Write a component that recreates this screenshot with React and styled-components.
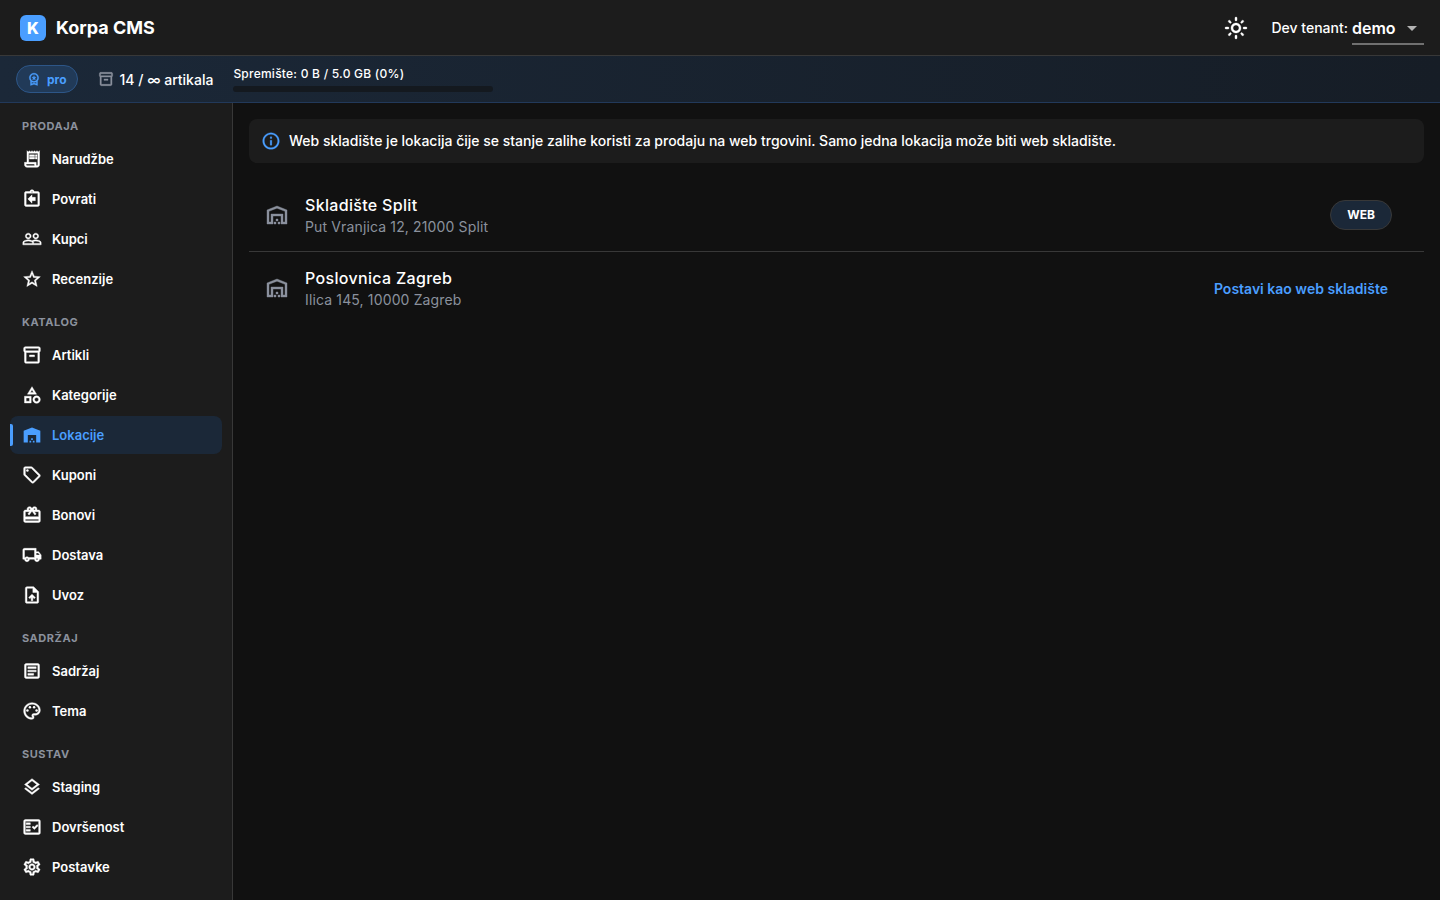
import { useState } from 'react';
import styled, { createGlobalStyle } from 'styled-components';
import {
  MdArrowDropDown,
  MdCardGiftcard,
  MdInfoOutline,
  MdOutlineArticle,
  MdOutlineAssignmentReturn,
  MdOutlineCategory,
  MdOutlineFactCheck,
  MdOutlineInventory2,
  MdOutlineLayers,
  MdOutlineLightMode,
  MdOutlineLocalShipping,
  MdOutlinePalette,
  MdOutlineReceiptLong,
  MdOutlineSell,
  MdOutlineSettings,
  MdOutlineUploadFile,
  MdOutlineWarehouse,
  MdOutlineWorkspacePremium,
  MdPeopleOutline,
  MdStarOutline,
  MdWarehouse,
} from 'react-icons/md';

const GlobalStyle = createGlobalStyle`
  :root {
    --bg: #111111;
    --surface: #1c1c1c;
    --line: #383838;
    --text: #ffffff;
    --muted: #8b919d;
    --accent: #4a9eff;
    --accent-bg: #1b2838;
  }
  * {
    box-sizing: border-box;
  }
  body {
    margin: 0;
    background: var(--bg);
    color: var(--text);
    font-family: Inter, 'Liberation Sans', sans-serif;
    font-size: 14px;
    -webkit-font-smoothing: antialiased;
  }
  button, select {
    font-family: inherit;
    color: inherit;
    border: none;
    background: none;
    padding: 0;
    cursor: pointer;
  }
  svg {
    flex: none;
    display: block;
  }
`;

const Page = styled.div`
  display: flex;
  flex-direction: column;
  min-height: 100vh;
`;

const HeaderBlock = styled.header`
  display: flex;
  justify-content: space-between;
  align-items: center;
  height: 56px;
  padding: 0 16px 0 20px;
  background: var(--surface);
  border-bottom: 1px solid var(--line);
`;

const Logo = styled.div`
  display: flex;
  align-items: center;
  gap: 10px;

  .mark {
    display: grid;
    place-items: center;
    width: 26px;
    height: 26px;
    border-radius: 6px;
    background: var(--accent);
    font-size: 16px;
    font-weight: 800;
  }
  .title {
    font-size: 18px;
    font-weight: 700;
  }
`;

const HeaderMenu = styled.div`
  display: flex;
  align-items: center;
  gap: 24px;

  button path:not([fill='none']) {
    stroke-width: 0.4;
  }
`;

const TenantField = styled.div`
  display: flex;
  align-items: center;
  gap: 4px;

  label {
    font-weight: 500;
  }
`;

const SelectBox = styled.div`
  position: relative;
  border-bottom: 2px solid #707070;

  select {
    display: block;
    appearance: none;
    width: 72px;
    height: 32px;
    padding-top: 2px;
    font-size: 16px;
    font-weight: 600;
    outline: none;
  }
  option {
    background: var(--surface);
  }
  svg {
    position: absolute;
    right: 0;
    top: 5px;
    color: #b3b3b3;
    pointer-events: none;
  }
`;

const PlanBar = styled.div`
  display: flex;
  align-items: center;
  gap: 20px;
  height: 47px;
  padding: 0 16px;
  background: linear-gradient(90deg, #1b2838, #161d26);
  border-bottom: 1px solid #22395a;

  path:not([fill='none']) {
    stroke-width: 0.6;
  }
`;

const PlanPill = styled.span`
  display: flex;
  align-items: center;
  gap: 6px;
  height: 28px;
  padding: 0 10px;
  border: 1px solid #2d5688;
  border-radius: 14px;
  background: #213a58;
  color: var(--accent);
  font-size: 12px;
  font-weight: 700;
`;

const Quota = styled.span`
  display: flex;
  align-items: center;
  gap: 6px;
  font-weight: 500;

  svg {
    color: var(--muted);
  }
`;

const Storage = styled.div`
  display: flex;
  flex-direction: column;
  gap: 4px;
  width: 260px;
  font-size: 12px;
  line-height: 16px;
  font-weight: 500;
  letter-spacing: 0.02em;

  .track {
    height: 6px;
    border-radius: 3px;
    background: #14191f;
    overflow: hidden;
  }
  .used {
    height: 100%;
    background: var(--accent);
  }
`;

const Body = styled.div`
  display: flex;
  flex: 1;
`;

const Sidebar = styled.nav`
  flex: none;
  width: 233px;
  padding: 0 10px 12px;
  background: var(--surface);
  border-right: 1px solid var(--line);
`;

const SectionTitle = styled.h2`
  margin: 0;
  padding: 16px 12px 6px;
  color: var(--muted);
  font-size: 11px;
  line-height: 14px;
  font-weight: 700;
  letter-spacing: 0.05em;
  text-transform: uppercase;
`;

const NavList = styled.ul`
  margin: 0;
  padding: 0;
  list-style: none;
`;

const NavItem = styled.a`
  position: relative;
  display: flex;
  align-items: center;
  gap: 10px;
  height: 38px;
  margin: 1px 0 2px;
  padding: 0 12px;
  border-radius: 8px;
  color: ${({ $active }) => ($active ? 'var(--accent)' : 'var(--text)')};
  background: ${({ $active }) => ($active ? 'var(--accent-bg)' : 'transparent')};
  font-size: 13px;
  font-weight: 600;
  text-decoration: none;

  path:not([fill='none']) {
    stroke-width: ${({ $active }) => ($active ? 0 : 0.5)};
  }

  &::before {
    content: '';
    display: ${({ $active }) => ($active ? 'block' : 'none')};
    position: absolute;
    left: 0;
    top: 8px;
    width: 3px;
    height: 22px;
    border-radius: 0 2px 2px 0;
    background: var(--accent);
  }

  li + li & {
    margin-top: 0;
  }
  li:last-child & {
    margin-bottom: 1px;
  }
`;

const Main = styled.main`
  flex: 1;
  min-width: 0;
  padding: 16px;
`;

const Notice = styled.p`
  display: flex;
  align-items: center;
  gap: 8px;
  margin: 0 0 16px;
  padding: 12px;
  border-radius: 8px;
  background: var(--surface);
  line-height: 20px;
  font-weight: 500;

  svg {
    color: var(--accent);
  }
  path:not([fill='none']) {
    stroke-width: 0.3;
  }
`;

const LocationList = styled.ul`
  margin: 0;
  padding: 0;
  list-style: none;
`;

const LocationRow = styled.li`
  display: flex;
  align-items: center;
  gap: 16px;
  min-height: 72px;
  padding: 0 32px 0 16px;

  & + & {
    border-top: 1px solid var(--line);
    min-height: 73px;
  }
  svg {
    color: var(--muted);
  }
  path:not([fill='none']) {
    stroke-width: 0.4;
  }
  .info {
    flex: 1;
  }
  .name {
    font-size: 16px;
    line-height: 24px;
    font-weight: 500;
    letter-spacing: 0.02em;
  }
  .address {
    color: var(--muted);
    line-height: 20px;
    letter-spacing: 0.01em;
  }
`;

const WebChip = styled.span`
  height: 30px;
  padding: 0 16px;
  border: 1px solid var(--line);
  border-radius: 15px;
  background: var(--accent-bg);
  font-size: 12px;
  line-height: 28px;
  font-weight: 700;
`;

const TextButton = styled.button`
  height: 40px;
  padding: 0 4px;
  color: var(--accent);
  font-size: 14px;
  font-weight: 600;
`;

const sections = [
  {
    title: 'Prodaja',
    items: [
      { label: 'Narudžbe', icon: MdOutlineReceiptLong },
      { label: 'Povrati', icon: MdOutlineAssignmentReturn },
      { label: 'Kupci', icon: MdPeopleOutline },
      { label: 'Recenzije', icon: MdStarOutline },
    ],
  },
  {
    title: 'Katalog',
    items: [
      { label: 'Artikli', icon: MdOutlineInventory2 },
      { label: 'Kategorije', icon: MdOutlineCategory },
      { label: 'Lokacije', icon: MdOutlineWarehouse, activeIcon: MdWarehouse },
      { label: 'Kuponi', icon: MdOutlineSell },
      { label: 'Bonovi', icon: MdCardGiftcard },
      { label: 'Dostava', icon: MdOutlineLocalShipping },
      { label: 'Uvoz', icon: MdOutlineUploadFile },
    ],
  },
  {
    title: 'Sadržaj',
    items: [
      { label: 'Sadržaj', icon: MdOutlineArticle },
      { label: 'Tema', icon: MdOutlinePalette },
    ],
  },
  {
    title: 'Sustav',
    items: [
      { label: 'Staging', icon: MdOutlineLayers },
      { label: 'Dovršenost', icon: MdOutlineFactCheck },
      { label: 'Postavke', icon: MdOutlineSettings },
    ],
  },
];

const locations = [
  { id: 1, name: 'Skladište Split', address: 'Put Vranjica 12, 21000 Split' },
  { id: 2, name: 'Poslovnica Zagreb', address: 'Ilica 145, 10000 Zagreb' },
];

const Header = () => {
  const [tenant, setTenant] = useState('demo');
  return (
    <HeaderBlock>
      <Logo>
        <span className='mark'>K</span>
        <span className='title'>Korpa CMS</span>
      </Logo>
      <HeaderMenu>
        <button type='button' aria-label='Svijetla tema'>
          <MdOutlineLightMode size={24} />
        </button>
        <TenantField>
          <label htmlFor='tenant'>Dev tenant:</label>
          <SelectBox>
            <select id='tenant' value={tenant} onChange={e => setTenant(e.target.value)}>
              <option value='demo'>demo</option>
            </select>
            <MdArrowDropDown size={24} />
          </SelectBox>
        </TenantField>
      </HeaderMenu>
    </HeaderBlock>
  )
}

const Plan = ({ used }) => (
  <PlanBar>
    <PlanPill>
      <MdOutlineWorkspacePremium size={14} />
      pro
    </PlanPill>
    <Quota>
      <MdOutlineInventory2 size={16} />
      14 / ∞ artikala
    </Quota>
    <Storage>
      <span>Spremište: 0 B / 5.0 GB ({used}%)</span>
      <div className='track'>
        <div className='used' style={{ width: `${used}%` }} />
      </div>
    </Storage>
  </PlanBar>
)

const App = () => {
  const [page, setPage] = useState('Lokacije');
  const [webId, setWebId] = useState(1);

  return (
    <Page>
      <GlobalStyle />
      <Header />
      <Plan used={0} />
      <Body>
        <Sidebar>
          {sections.map(({ title, items }) => (
            <section key={title}>
              <SectionTitle>{title}</SectionTitle>
              <NavList>
                {items.map(({ label, icon, activeIcon }) => {
                  const active = page === label;
                  const Icon = (active && activeIcon) || icon;
                  return (
                    <li key={label}>
                      <NavItem href='#' $active={active} onClick={() => setPage(label)}>
                        <Icon size={20} />
                        {label}
                      </NavItem>
                    </li>
                  )
                })}
              </NavList>
            </section>
          ))}
        </Sidebar>
        <Main>
          <Notice>
            <MdInfoOutline size={20} />
            Web skladište je lokacija čije se stanje zalihe koristi za prodaju na web trgovini. Samo jedna lokacija može biti web skladište.
          </Notice>
          <LocationList>
            {locations.map(({ id, name, address }) => (
              <LocationRow key={id}>
                <MdOutlineWarehouse size={24} />
                <div className='info'>
                  <div className='name'>{name}</div>
                  <div className='address'>{address}</div>
                </div>
                {id === webId ? (
                  <WebChip>WEB</WebChip>
                ) : (
                  <TextButton type='button' onClick={() => setWebId(id)}>
                    Postavi kao web skladište
                  </TextButton>
                )}
              </LocationRow>
            ))}
          </LocationList>
        </Main>
      </Body>
    </Page>
  )
}

export default App;
